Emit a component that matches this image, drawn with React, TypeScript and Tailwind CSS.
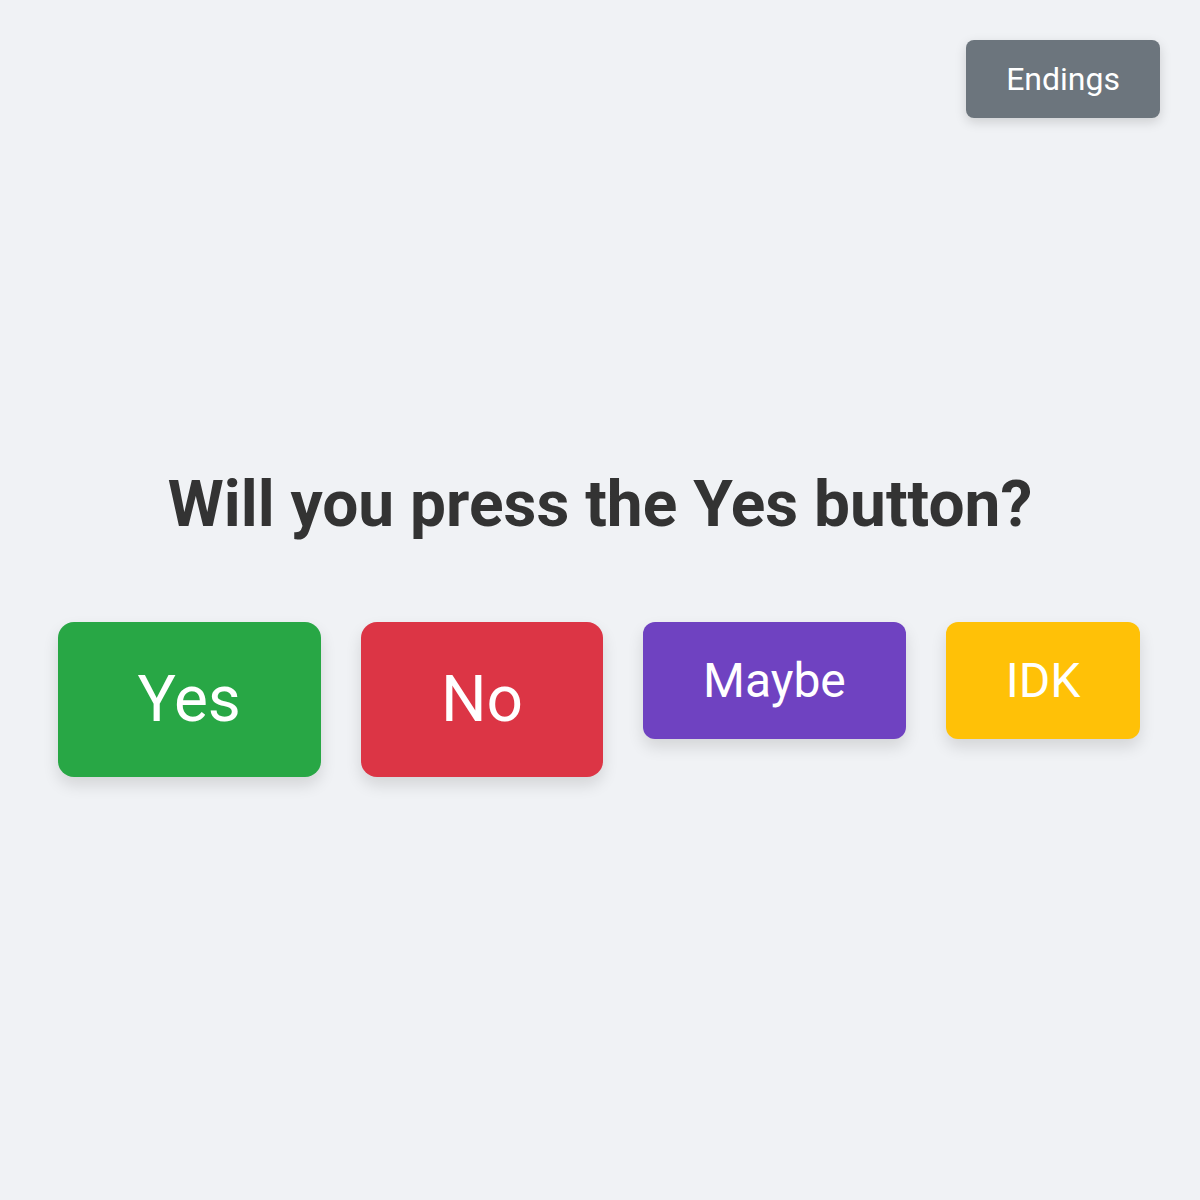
import React from "react";

const choices = [
  { label: "Yes", cls: "bg-[#28a745] text-[64px] px-[80px] py-[40px] rounded-[16px]" },
  { label: "No", cls: "bg-[#dc3545] text-[64px] px-[80px] py-[40px] rounded-[16px]" },
  { label: "Maybe", cls: "bg-[#6f42c1] text-[48px] px-[60px] py-[30px] rounded-[12px]" },
  { label: "IDK", cls: "bg-[#ffc107] text-[48px] px-[60px] py-[30px] rounded-[12px]" },
];

export default function App() {
  return (
    <div className="relative min-h-[1200px] w-full bg-[#f0f2f5] font-['Roboto',sans-serif]">
      {/* Endings button - top right */}
      <button className="absolute top-[40px] right-[40px] bg-[#6c757d] text-white text-[32px] leading-[normal] px-[40px] py-[20px] rounded-[8px] shadow-[0_4px_12px_rgba(0,0,0,0.15)]">
        Endings
      </button>

      <div className="flex flex-col items-center pt-[467px]">
        <h1 className="text-[64px] leading-[normal] font-bold text-[#333]">
          Will you press the Yes button?
        </h1>

        <div className="flex items-start gap-[40px] mt-[80px] -translate-x-px">
          {choices.map((c) => (
            <button
              key={c.label}
              className={`${c.cls} text-white leading-[normal] shadow-[0_8px_16px_rgba(0,0,0,0.12)]`}
            >
              {c.label}
            </button>
          ))}
        </div>
      </div>
    </div>
  );
}
